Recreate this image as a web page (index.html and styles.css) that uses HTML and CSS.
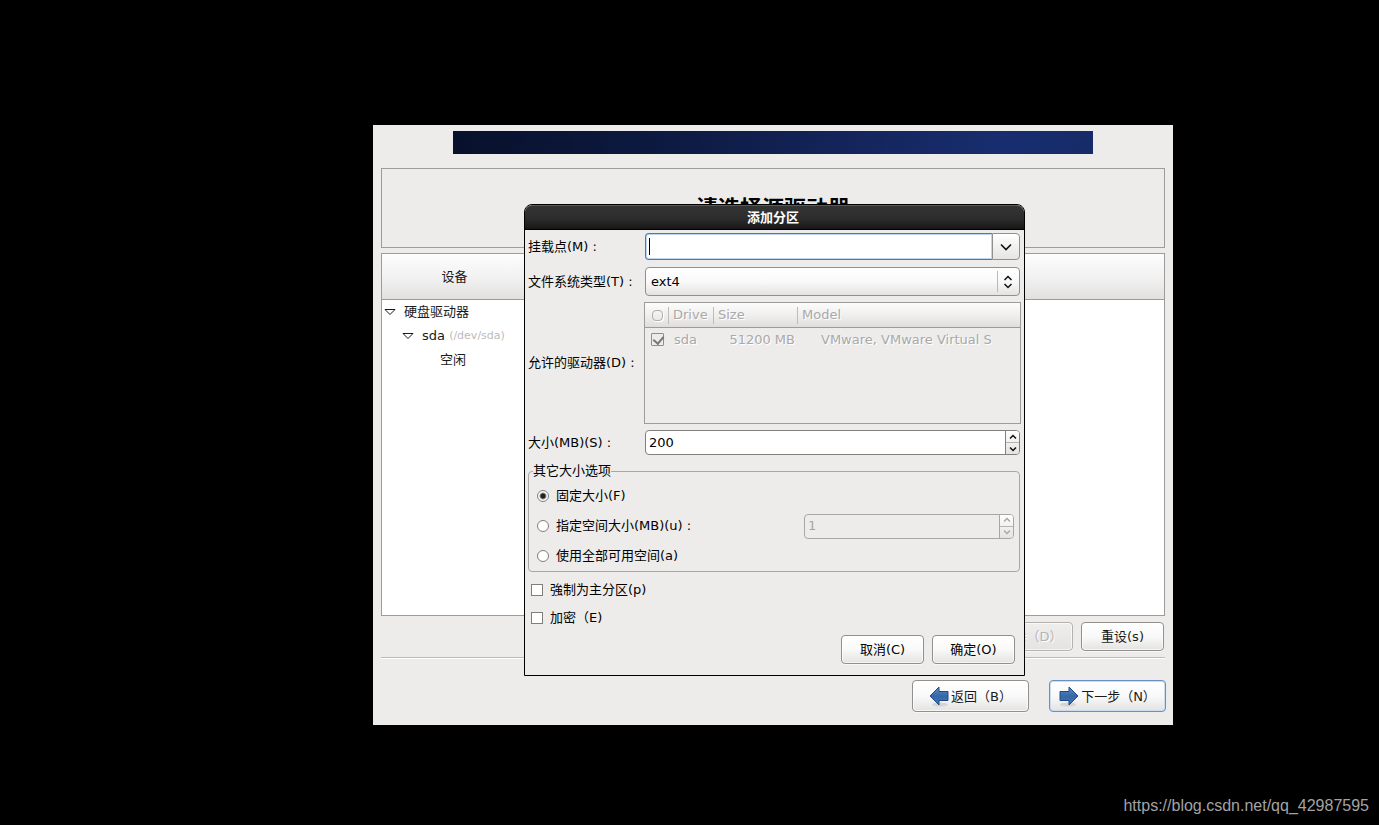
FILE: index.html
```html
<!DOCTYPE html>
<html lang="zh-CN">
<head>
<meta charset="utf-8">
<title>添加分区</title>
<link rel="stylesheet" href="styles.css">
</head>
<body>
<main class="installer">
  <div class="banner"></div>
  <header class="heading"><h1>请选择源驱动器</h1></header>

  <section class="devices">
    <div class="devices-head"><span>设备</span></div>
    <ul class="tree">
      <li class="level-1"><svg class="expander" viewBox="0 0 12 8"><path d="M1 1.500h10L6 6.500z"/></svg>硬盘驱动器</li>
      <li class="level-2"><svg class="expander" viewBox="0 0 12 8"><path d="M1 1.500h10L6 6.500z"/></svg>sda <small>(/dev/sda)</small></li>
      <li class="level-3">空闲</li>
    </ul>
  </section>

  <div class="actions">
    <button class="btn" type="button" disabled>删除（D）</button>
    <button class="btn" type="button">重设(s)</button>
  </div>

  <nav class="steps">
    <button class="btn step" type="button">
      <svg class="arrow" viewBox="0 0 20 22"><defs><linearGradient id="blue" x1="0" y1="0" x2="0" y2="1"><stop offset="0" stop-color="#5f8fc6"/><stop offset=".5" stop-color="#3667a8"/><stop offset="1" stop-color="#3f78b8"/></linearGradient></defs><ellipse cx="11" cy="19.500" rx="8" ry="2" fill="#000" opacity=".1"/><path d="M1 11 10 2v4.500h9v9h-9V20z" fill="url(#blue)" stroke="#1f4a87"/></svg>返回（B）</button>
    <button class="btn step next" type="button">
      <svg class="arrow" viewBox="0 0 20 22"><ellipse cx="9" cy="19.500" rx="8" ry="2" fill="#000" opacity=".1"/><path d="M19 11 10 2v4.500H1v9h9V20z" fill="url(#blue)" stroke="#1f4a87"/></svg>下一步（N）</button>
  </nav>

  <form class="dialog" role="dialog" aria-labelledby="dialog-title">
    <h2 class="titlebar" id="dialog-title">添加分区</h2>
    <div class="dialog-body">
      <div class="fields">
        <label for="mount">挂载点(M) :</label>
        <div class="combo">
          <input id="mount" type="text">
          <span class="caret"></span>
          <button type="button" aria-label="展开"><svg width="12" height="8" viewBox="0 0 12 8"><path d="M1 1.500 6 6.500l5-5"/></svg></button>
        </div>

        <label for="fstype">文件系统类型(T) :</label>
        <div class="dropdown">
          <select id="fstype"><option>ext4</option></select>
          <svg width="10" height="14" viewBox="0 0 10 14"><path d="M1.500 5 5 1.500 8.500 5M1.500 9 5 12.500 8.500 9"/></svg>
        </div>

        <label for="drive-sda">允许的驱动器(D) :</label>
        <div class="drives">
          <table>
            <thead><tr><th class="col-check"><span class="ring"></span></th><th class="col-drive">Drive</th><th class="col-size">Size</th><th>Model</th></tr></thead>
            <tbody><tr><td class="col-check"><input class="check" id="drive-sda" type="checkbox" checked disabled></td><td class="col-drive">sda</td><td class="col-size">51200 MB</td><td class="model">VMware, VMware Virtual S</td></tr></tbody>
          </table>
        </div>

        <label for="size">大小(MB)(S) :</label>
        <div class="spin">
          <input id="size" type="text" value="200">
          <div class="spin-buttons">
            <button type="button" aria-label="增加"><svg width="8" height="6" viewBox="0 0 8 6"><path d="M1 4.500 4 1.500l3 3"/></svg></button>
            <button type="button" aria-label="减少"><svg width="8" height="6" viewBox="0 0 8 6"><path d="M1 1.500l3 3 3-3"/></svg></button>
          </div>
        </div>
      </div>

      <fieldset class="options">
        <legend>其它大小选项</legend>
        <div class="option"><label><input class="radio" type="radio" name="grow" checked>固定大小(F)</label></div>
        <div class="option">
          <label><input class="radio" type="radio" name="grow">指定空间大小(MB)(u) :</label>
          <div class="spin limit">
            <input type="text" value="1" aria-label="指定空间大小(MB)" disabled>
            <div class="spin-buttons">
              <button type="button" aria-label="增加" disabled><svg width="8" height="6" viewBox="0 0 8 6"><path d="M1 4.500 4 1.500l3 3"/></svg></button>
              <button type="button" aria-label="减少" disabled><svg width="8" height="6" viewBox="0 0 8 6"><path d="M1 1.500l3 3 3-3"/></svg></button>
            </div>
          </div>
        </div>
        <div class="option"><label><input class="radio" type="radio" name="grow">使用全部可用空间(a)</label></div>
      </fieldset>

      <div class="flags">
        <label><input class="check" type="checkbox">強制为主分区(p)</label>
        <label><input class="check" type="checkbox">加密（E)</label>
      </div>

      <div class="dialog-actions">
        <button class="btn" type="button">取消(C)</button>
        <button class="btn" type="button">确定(O)</button>
      </div>
    </div>
  </form>
</main>
<footer class="watermark">https://blog.csdn.net/qq_42987595</footer>
</body>
</html>
```
FILE: styles.css
```css
* { box-sizing: border-box; }
body {
  margin: 0;
  min-height: 100vh;
  display: flex;
  flex-direction: column;
  background: #000;
  color: #1a1a1a;
  font: 13px/24px "DejaVu Sans", "Noto Sans CJK SC", sans-serif;
}
button, input, select { font: inherit; color: inherit; margin: 0; }
h1, h2, ul { margin: 0; padding: 0; }

.installer {
  position: relative;
  display: flex;
  flex-direction: column;
  margin: 125px 206px 0 373px;
  padding: 6px 8px 13px;
  background: #edeceb;
}
.banner {
  height: 23px;
  margin: 0 72px;
  background: linear-gradient(100deg, #08112b, #0d1a42 35%, #14245a 60%, #182d6e 85%, #172b69);
}
.heading {
  height: 80px;
  margin-top: 14px;
  padding-top: 24px;
  border: 1px solid #9d9c9a;
  text-align: center;
}
.heading h1 { font-size: 22px; line-height: 32px; color: #000; }

.devices {
  height: 363px;
  margin-top: 5px;
  border: 1px solid #9d9c9a;
  background: #fff;
}
.devices-head {
  height: 46px;
  border-bottom: 1px solid #9d9c9a;
  background: linear-gradient(#fdfdfd, #f3f2f2 50%, #e2e1e0);
  line-height: 46px;
}
.devices-head span { display: block; width: 145px; text-align: center; }
.tree { list-style: none; }
.tree li { display: flex; align-items: center; height: 24px; white-space: pre; }
.tree small { font-size: 11px; color: #bcbbba; }
.expander { width: 12px; height: 8px; margin-right: 8px; fill: #fff; stroke: #1a1a1a; }
.level-1 { padding-left: 2px; }
.level-2 { padding-left: 20px; }
.level-3 { padding-left: 58px; }

.btn {
  min-width: 83px;
  height: 29px;
  padding: 0;
  border: 1px solid #91908e;
  border-radius: 4px;
  background: linear-gradient(#fff, #f9f9f9 50%, #e4e3e2);
  box-shadow: inset 0 0 0 1px #ffffffaa, 0 1px 0 #ffffff99;
  line-height: 25px;
  white-space: nowrap;
}
.btn:disabled {
  border-color: #b3b2b0;
  background: linear-gradient(#efeeed, #e4e3e2);
  color: #b4b3b1;
  text-shadow: 1px 1px 0 #fff;
}
.actions {
  display: flex;
  justify-content: flex-end;
  gap: 8px;
  padding: 6px 1px 6px 0;
  border-bottom: 1px solid #bbbab8;
  box-shadow: 0 1px 0 #fff;
}
.steps { display: flex; justify-content: flex-end; gap: 20px; margin: 22px -1px 0 0; }
.step { display: flex; align-items: center; justify-content: center; width: 117px; height: 32px; }
.next { border-color: #6a8fc0; box-shadow: inset 0 0 0 1px #c9dcf0; }
.arrow { width: 20px; height: 22px; margin-right: 2px; }

.dialog {
  position: absolute;
  top: 79px;
  left: 151px;
  right: 148px;
  border: 1px solid #000;
  border-radius: 8px 8px 0 0;
  background: #edeceb;
  color: #000;
}
.titlebar {
  height: 25px;
  padding-right: 3px;
  border-top: 1px solid #5a5a5a;
  border-bottom: 1px solid #000;
  border-radius: 7px 7px 0 0;
  background: linear-gradient(#343434, #2c2c2c 55%, #171717);
  color: #fff;
  font-size: 13px;
  line-height: 24px;
  text-align: center;
}
.dialog-body { padding: 3px 4px 11px 3px; }
.fields {
  display: grid;
  grid-template-columns: 116px 1fr;
  row-gap: 6px;
  align-items: center;
}
.fields label { white-space: nowrap; }

.combo { position: relative; display: flex; height: 27px; margin: 0 0 1px 1px; }
.combo input {
  flex: 1;
  min-width: 0;
  padding: 0 4px;
  border: 1px solid #4d79b0;
  border-right: 0;
  border-radius: 4px 0 0 4px;
  background: #fff;
  box-shadow: inset 0 0 0 1px #bdd5ee;
  outline: 0;
}
.combo button {
  display: flex;
  align-items: center;
  justify-content: center;
  width: 28px;
  padding: 0;
  border: 1px solid #91908e;
  border-radius: 0 4px 4px 0;
  background: linear-gradient(#fff, #e6e5e4);
}
.caret { position: absolute; top: 5px; left: 4px; width: 1px; height: 17px; background: #000; }
.combo path { fill: none; stroke: #111; stroke-width: 1.6; }

.dropdown { position: relative; margin-left: 1px; }
.dropdown select {
  display: block;
  width: 100%;
  height: 29px;
  padding: 0 26px 0 5px;
  appearance: none;
  border: 1px solid #91908e;
  border-radius: 4px;
  background: linear-gradient(#bbbab8, #bbbab8) right 21px center / 1px 21px no-repeat, linear-gradient(#fff, #f9f9f9 50%, #e4e3e2);
}
.dropdown svg { position: absolute; top: 8px; right: 7px; pointer-events: none; }
.dropdown path { fill: none; stroke: #111; stroke-width: 1.5; }

.drives {
  height: 122px;
  margin-right: -1px;
  border: 1px solid #9d9c9a;
  color: #aaa9a7;
  text-shadow: 1px 1px 0 #fff;
}
.drives table { width: 100%; border-collapse: separate; border-spacing: 0; table-layout: fixed; }
.drives th, .drives td { height: 25px; padding: 0 0 0 4px; text-align: left; font-weight: normal; white-space: nowrap; }
.drives th { border-bottom: 1px solid #9d9c9a; background: linear-gradient(#fcfcfc, #f0efee 50%, #dfdedd); }
.drives th + th { background: linear-gradient(#bdbcba, #bdbcba) left center / 1px 17px no-repeat, linear-gradient(#fcfcfc, #f0efee 50%, #dfdedd); }
.drives td { height: 23px; line-height: 23px; }
.drives .col-check { width: 23px; padding-left: 6px; line-height: 0; vertical-align: middle; }
.drives .col-drive { width: 45px; padding-left: 5px; }
.drives .col-size { width: 84px; padding-left: 5px; }
.drives th:last-child { padding-left: 5px; }
.drives td.col-drive { padding-left: 6px; }
.drives td.col-size { padding: 0 2px 0 0; text-align: right; }
.drives td.model { padding-left: 24px; }
.ring { display: block; width: 11px; height: 11px; margin-left: 1px; border: 1px solid #b0afad; border-radius: 4px; box-shadow: 1px 1px 0 #fff; }

.spin {
  display: flex;
  height: 25px;
  margin-left: 1px;
  border: 1px solid #81807e;
  border-radius: 4px;
  background: #fff;
  overflow: hidden;
}
.spin > input { flex: 1; min-width: 0; padding: 0 3px; border: 0; background: none; outline: 0; }
.spin-buttons { display: flex; flex-direction: column; width: 14px; border-left: 1px solid #81807e; background: linear-gradient(#fff, #e4e3e2); }
.spin-buttons button { display: flex; flex: 1; align-items: center; justify-content: center; padding: 0; border: 0; background: none; }
.spin-buttons button + button { border-top: 1px solid #b5b4b2; }
.spin path { fill: none; stroke: #111; stroke-width: 1.5; }
.limit { width: 210px; border-color: #a8a7a5; background: none; color: #a5a4a2; }
.limit .spin-buttons { border-color: #a8a7a5; }
.limit path { stroke: #aaa9a7; }

.options {
  min-width: 0;
  margin: 4px 0 0;
  padding: 0 5px 0 8px;
  border: 1px solid #a8a7a5;
  border-radius: 4px;
}
.options legend { height: 24px; margin-left: -4px; padding: 0; }
.option { display: flex; align-items: center; justify-content: space-between; height: 30px; }
.option:first-of-type { margin-top: -2px; }
.option label, .flags label { display: flex; align-items: center; }
.radio, .check { appearance: none; display: block; flex: none; width: 12px; height: 12px; margin-right: 7px; border: 1px solid #7f7e7c; background: #fff; }
.radio { border-radius: 50%; }
.radio:checked { background: radial-gradient(circle, #222 2px, #fff 4px); }
.drives .check { width: 13px; height: 13px; border-color: #8f8e8c; border-radius: 1px; background: none; }
.check:checked::before { content: ""; display: block; width: 5px; height: 8px; margin: 0 0 0 3px; border: solid #777674; border-width: 0 2px 2px 0; transform: rotate(40deg); }

.flags { padding: 4px 0 0 3px; }
.flags label { height: 28px; }
.dialog-actions { display: flex; justify-content: flex-end; gap: 8px; padding: 3px 5px 0 0; }

.watermark {
  margin: auto 10px 7px 0;
  color: #a3a3a3;
  font: 16px/24px "Liberation Sans", sans-serif;
  text-align: right;
}
```
